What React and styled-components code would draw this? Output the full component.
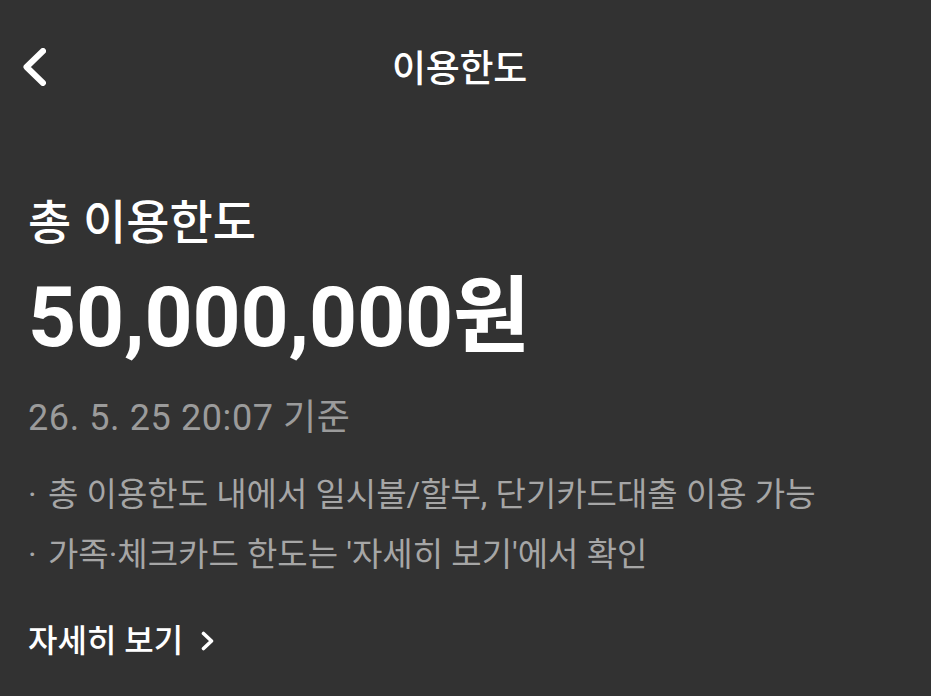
import styled, { createGlobalStyle } from "styled-components";

const GlobalStyle = createGlobalStyle`
  html, body {
    margin: 0;
    padding: 0;
    background: #323232;
  }
  body {
    font-family: Roboto, "Noto Sans CJK KR", sans-serif;
    color: #ffffff;
  }
`;

const Page = styled.div`
  width: 931px;
  height: 696px;
  background: #323232;
  overflow: hidden;
`;

const Header = styled.header`
  position: relative;
  height: 132px;
  padding-right: 12px;
  display: flex;
  align-items: center;
  justify-content: center;
`;

const BackButton = styled.button`
  position: absolute;
  left: 23px;
  top: 48px;
  padding: 0;
  border: none;
  background: none;
  display: flex;
`;

const Title = styled.h1`
  margin: 0;
  font-size: 37px;
  font-weight: 500;
  letter-spacing: -0.3px;
`;

const Content = styled.main`
  padding: 62px 28px 0;
`;

const Label = styled.h2`
  margin: 0;
  font-size: 47px;
  font-weight: 500;
  line-height: 58px;
`;

const Amount = styled.div`
  margin-top: 18px;
  font-size: 84px;
  font-weight: 700;
  line-height: 96px;
  letter-spacing: -0.2px;
`;

const Timestamp = styled.div`
  margin-top: 30px;
  font-size: 36px;
  line-height: 44px;
  letter-spacing: 0.6px;
  color: #9b9b9b;
`;

const Notes = styled.ul`
  margin: 33px 0 0;
  padding: 0;
  list-style: none;
  display: flex;
  flex-direction: column;
  gap: 16px;
`;

const Note = styled.li`
  display: flex;
  font-size: 33px;
  line-height: 44px;
  color: #a6a6a6;

  &::before {
    content: "·";
    width: 20px;
    flex: none;
  }
`;

const MoreLink = styled.a`
  margin-top: 42px;
  display: inline-flex;
  align-items: center;
  gap: 18px;
  font-size: 32px;
  font-weight: 500;
  line-height: 44px;
  color: #ffffff;
`;

const BackIcon = () => (
  <svg width="23" height="38" viewBox="0 0 23 38" fill="none">
    <path
      d="M20 3 L3.5 19 L20 35"
      stroke="#ffffff"
      strokeWidth="6"
      strokeLinecap="round"
      strokeLinejoin="round"
    />
  </svg>
);

const ArrowIcon = () => (
  <svg width="13" height="20" viewBox="0 0 13 20" fill="none">
    <path
      d="M2.5 2.5 L10.5 10 L2.5 17.5"
      stroke="#ffffff"
      strokeWidth="3.6"
      strokeLinecap="round"
      strokeLinejoin="round"
    />
  </svg>
);

export default function App() {
  return (
    <Page>
      <GlobalStyle />
      <Header>
        <BackButton aria-label="뒤로">
          <BackIcon />
        </BackButton>
        <Title>이용한도</Title>
      </Header>
      <Content>
        <Label>총 이용한도</Label>
        <Amount>50,000,000원</Amount>
        <Timestamp>26. 5. 25 20:07 기준</Timestamp>
        <Notes>
          <Note>총 이용한도 내에서 일시불/할부, 단기카드대출 이용 가능</Note>
          <Note>가족·체크카드 한도는 '자세히 보기'에서 확인</Note>
        </Notes>
        <MoreLink>
          자세히 보기
          <ArrowIcon />
        </MoreLink>
      </Content>
    </Page>
  );
}
